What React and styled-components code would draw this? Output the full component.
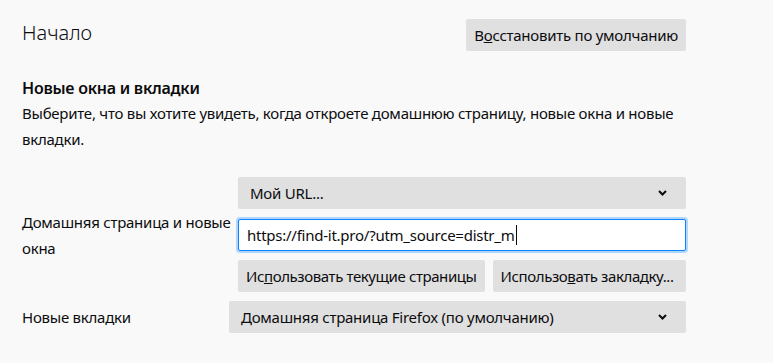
import styled, { createGlobalStyle } from 'styled-components'

const GlobalStyle = createGlobalStyle`
  body {
    margin: 0;
    background: #f9f9fa;
    color: #0c0c0d;
    font-family: 'Noto Sans', 'Open Sans', sans-serif;
    font-size: 15px;
    letter-spacing: -0.25px;
  }
`

const Page = styled.div`
  width: 664px;
  padding: 19px 0 0 22px;
`

const Header = styled.div`
  display: flex;
  justify-content: space-between;
  align-items: center;
`

const Title = styled.h1`
  margin: 0 0 5px;
  font-size: 20px;
  font-weight: 300;
  letter-spacing: 0;
`

const Button = styled.button`
  height: 32px;
  min-width: 0;
  padding: 0 8px;
  border: none;
  border-radius: 2px;
  background: #e0e0e1;
  color: #0c0c0d;
  font: inherit;
  letter-spacing: ${p => (p.tight ? '-0.4px' : 'inherit')};
  white-space: nowrap;
  overflow: hidden;
  flex: ${p => (p.grow ? 1 : 'none')};
  text-align: left;
`

const Heading = styled.h2`
  margin: 26px 0 0;
  font-size: 16px;
  font-weight: 600;
  line-height: 23px;
`

const Description = styled.p`
  margin: 0;
  line-height: 26px;
`

const Row = styled.div`
  display: flex;
  align-items: center;
  margin-top: ${p => p.top}px;
`

const Label = styled.div`
  width: ${p => p.width}px;
  flex: none;
  line-height: 26px;
`

const Controls = styled.div`
  flex: 1;
  min-width: 0;
  display: flex;
  flex-direction: column;
  gap: 10px;
`

const Select = styled.div`
  height: 32px;
  display: flex;
  align-items: center;
  justify-content: space-between;
  padding: 0 19px 0 12px;
  border-radius: 2px;
  background: #e0e0e1;
`

const Input = styled.div`
  height: 32px;
  box-sizing: border-box;
  display: flex;
  align-items: center;
  padding: 0 8px;
  border: 1px solid #0a84ff;
  border-radius: 2px;
  background: #fff;
  box-shadow: 0 0 0 2px rgba(10, 132, 255, 0.3);
`

const Caret = styled.span`
  display: inline-block;
  width: 1px;
  height: 20px;
  background: #0c0c0d;
  margin-left: 1px;
`

const ButtonRow = styled.div`
  display: flex;
  gap: 8px;
  margin-top: -1px;
`

const Chevron = () => (
  <svg width="9" height="6" viewBox="0 0 9 6">
    <polyline points="1,1 4.5,4.5 8,1" fill="none" stroke="#0c0c0d" strokeWidth="2" />
  </svg>
)

export default function App() {
  return (
    <>
      <GlobalStyle />
      <Page>
        <Header>
          <Title>Начало</Title>
          <Button>В<u>о</u>сстановить по умолчанию</Button>
        </Header>
        <Heading>Новые окна и вкладки</Heading>
        <Description>
          Выберите, что вы хотите увидеть, когда откроете домашнюю страницу, новые окна и новые вкладки.
        </Description>
        <Row top={25}>
          <Label width={216}>Домашняя страница и новые окна</Label>
          <Controls>
            <Select>
              <span>Мой URL...</span>
              <Chevron />
            </Select>
            <Input>
              <span>https://find-it.pro/?utm_source=distr_m</span>
              <Caret />
            </Input>
            <ButtonRow>
              <Button tight>Ис<u>п</u>ользовать текущие страницы</Button>
              <Button grow tight>Использо<u>в</u>ать закладку...</Button>
            </ButtonRow>
          </Controls>
        </Row>
        <Row top={9}>
          <Label width={207}>Новые вкладки</Label>
          <Controls>
            <Select>
              <span>Домашняя страница Firefox (по умолчанию)</span>
              <Chevron />
            </Select>
          </Controls>
        </Row>
      </Page>
    </>
  )
}
